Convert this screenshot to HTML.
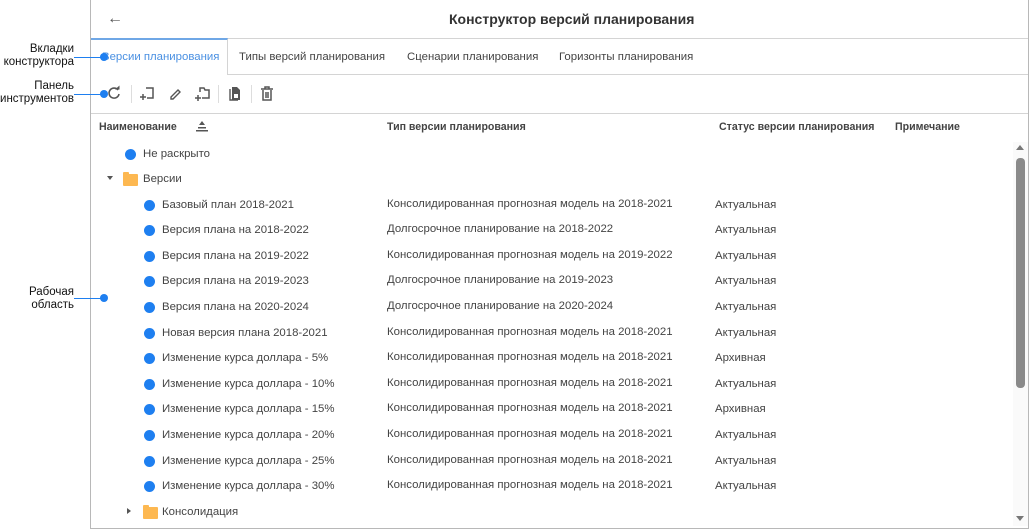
<!DOCTYPE html>
<html><head><meta charset="utf-8"><style>
*{margin:0;padding:0;box-sizing:border-box}
body{width:1029px;height:529px;background:#fff;font-family:"Liberation Sans",Roboto,sans-serif;position:relative;overflow:hidden;color:#333}
.a{position:absolute;white-space:nowrap}
.frame{position:absolute;left:90px;top:0;width:939px;height:529px;border-left:1px solid #b8b8b8;border-right:1px solid #b8b8b8;border-bottom:1px solid #b8b8b8}
.hl{position:absolute;left:91px;right:1px;height:1px;background:#d4d4d4}
.t{font-size:11.4px;color:#444}
.b{font-size:10.6px;font-weight:bold;color:#444}
.dot{position:absolute;width:11px;height:11px;border-radius:50%;background:#1e7ff0}
.fold{position:absolute;width:15px;height:12px;background:#fdb851;border-radius:1px}
.fold:before{content:"";position:absolute;left:0;top:-2px;width:6px;height:3px;background:#fdb851;border-radius:1px 1px 0 0}
.lbl{font-size:11.5px;color:#111;text-align:right;line-height:13px}
.ln{position:absolute;height:1px;background:#1e7ff0}
.ldot{position:absolute;width:8px;height:8px;border-radius:50%;background:#1e7ff0}
.sep{position:absolute;top:85px;width:1px;height:18px;background:#ddd}
</style></head><body>
<div class="frame"></div>
<div class="hl" style="top:38px"></div>
<div class="hl" style="top:74px"></div>
<div class="hl" style="top:113px"></div>
<div class="a" style="left:107px;top:10px;font-size:16px;color:#555">&#8592;</div>
<div class="a" style="left:449px;top:11px;font-size:14px;font-weight:bold;color:#333">Конструктор версий планирования</div>
<div class="a" style="left:91px;top:38px;width:137px;height:37px;background:#fff;border-top:2px solid #6fa7e6;border-right:1px solid #d4d4d4"></div>
<div class="a" style="left:102px;top:51px;font-size:11.4px;color:#4a90e2">Версии планирования</div>
<div class="a t" style="left:239px;top:51px">Типы версий планирования</div>
<div class="a t" style="left:407px;top:51px">Сценарии планирования</div>
<div class="a t" style="left:559px;top:51px">Горизонты планирования</div>
<svg class="a" style="left:106px;top:85px" width="16" height="16" viewBox="0 0 16 16"><path d="M12 5A5 5 0 1 0 13 9" fill="none" stroke="#555" stroke-width="1.6"/><path d="M9 4.5h4.5V0.5z" fill="#555"/></svg>
<div class="sep" style="left:131px"></div>
<svg class="a" style="left:140px;top:85px" width="16" height="16"><path d="M6 3h7v10H7M3 9v6M0 12h6" fill="none" stroke="#555" stroke-width="1.5"/></svg>
<svg class="a" style="left:168px;top:86px" width="14" height="14"><path d="M3 11l7-7 2 2-7 7H3z" fill="none" stroke="#555" stroke-width="1.4"/></svg>
<svg class="a" style="left:195px;top:86px" width="16" height="16"><path d="M5 6V2h4l1 2h4v8H7M3 9v6M0 12h6" fill="none" stroke="#555" stroke-width="1.5"/></svg>
<div class="sep" style="left:218px"></div>
<svg class="a" style="left:228px;top:86px" width="14" height="15"><path d="M4 1h5l3 3v10H4z" fill="#555"/><path d="M2 3v11h8" fill="none" stroke="#555" stroke-width="1.4"/><rect x="6" y="8" width="4" height="4" fill="#fff"/></svg>
<div class="sep" style="left:251px"></div>
<svg class="a" style="left:260px;top:86px" width="14" height="15"><path d="M1 3h12M5 3V1h4v2M3 4v10h8V4M6 6v6M8 6v6" fill="none" stroke="#555" stroke-width="1.5"/></svg>
<div class="a b" style="left:99px;top:121px">Наименование</div>
<svg class="a" style="left:195px;top:120px" width="14" height="12"><path d="M7 1l3 4H4z" fill="#555"/><rect x="3" y="7" width="8" height="1.5" fill="#555"/><rect x="1" y="10" width="12" height="1.5" fill="#555"/></svg>
<div class="a b" style="left:387px;top:121px">Тип версии планирования</div>
<div class="a b" style="left:719px;top:121px">Статус версии планирования</div>
<div class="a b" style="left:895px;top:121px">Примечание</div>
<div class="a" style="left:1013px;top:142px;width:15px;height:384px;background:#fafafa"></div>
<div class="a" style="left:1016px;top:145px;border:4px solid transparent;border-bottom:5px solid #777;border-top:0"></div>
<div class="a" style="left:1016px;top:158px;width:9px;height:230px;background:#8a8a8a;border-radius:4px"></div>
<div class="a" style="left:1016px;top:516px;border:4px solid transparent;border-top:5px solid #777;border-bottom:0"></div>
<div class="dot" style="left:125px;top:149px"></div><div class="a t" style="left:143px;top:148px">Не раскрыто</div>
<div class="a" style="left:107px;top:176px;border:3px solid transparent;border-top:4px solid #555"></div>
<div class="fold" style="left:123px;top:174px"></div><div class="a t" style="left:143px;top:173px">Версии</div>
<div id="rows"></div>
<div class="a" style="left:127px;top:508px;border:3px solid transparent;border-left:4px solid #555"></div>
<div class="fold" style="left:143px;top:507px"></div><div class="a t" style="left:162px;top:506px">Консолидация</div>
<div class="a lbl" style="right:955px;top:43px">Вкладки<br>конструктора</div>
<div class="ln" style="left:74px;top:57px;width:30px"></div><div class="ldot" style="left:100px;top:53px"></div>
<div class="a lbl" style="right:955px;top:80px">Панель<br>инструментов</div>
<div class="ln" style="left:74px;top:94px;width:30px"></div><div class="ldot" style="left:100px;top:90px"></div>
<div class="a lbl" style="right:955px;top:286px">Рабочая<br>область</div>
<div class="ln" style="left:74px;top:298px;width:30px"></div><div class="ldot" style="left:100px;top:294px"></div>
<script>
var d=[["Базовый план 2018-2021","Консолидированная прогнозная модель на 2018-2021","Актуальная"],
["Версия плана на 2018-2022","Долгосрочное планирование на 2018-2022","Актуальная"],
["Версия плана на 2019-2022","Консолидированная прогнозная модель на 2019-2022","Актуальная"],
["Версия плана на 2019-2023","Долгосрочное планирование на 2019-2023","Актуальная"],
["Версия плана на 2020-2024","Долгосрочное планирование на 2020-2024","Актуальная"],
["Новая версия плана 2018-2021","Консолидированная прогнозная модель на 2018-2021","Актуальная"],
["Изменение курса доллара - 5%","Консолидированная прогнозная модель на 2018-2021","Архивная"],
["Изменение курса доллара - 10%","Консолидированная прогнозная модель на 2018-2021","Актуальная"],
["Изменение курса доллара - 15%","Консолидированная прогнозная модель на 2018-2021","Архивная"],
["Изменение курса доллара - 20%","Консолидированная прогнозная модель на 2018-2021","Актуальная"],
["Изменение курса доллара - 25%","Консолидированная прогнозная модель на 2018-2021","Актуальная"],
["Изменение курса доллара - 30%","Консолидированная прогнозная модель на 2018-2021","Актуальная"]];
var h="";d.forEach(function(r,i){var y=Math.round(204.5+i*25.6);
h+='<div class="dot" style="left:144px;top:'+(y-5)+'px"></div><div class="a t" style="left:162px;top:'+(y-6)+'px">'+r[0]+'</div><div class="a t" style="left:387px;top:'+(y-7)+'px">'+r[1]+'</div><div class="a t" style="left:715px;top:'+(y-6)+'px">'+r[2]+'</div>';});
document.getElementById("rows").outerHTML=h;
</script>
</body></html>
